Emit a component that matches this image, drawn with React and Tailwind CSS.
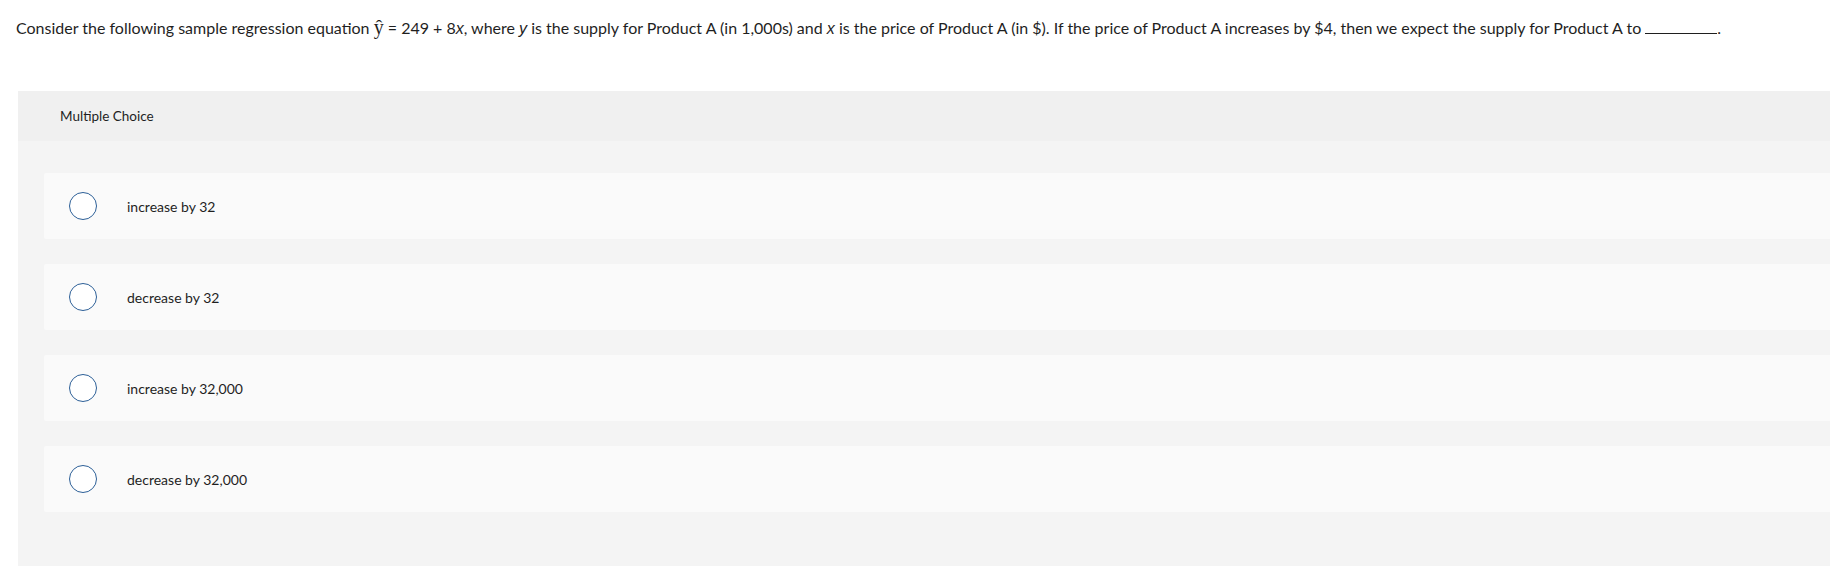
import React from "react";

const options = ["increase by 32", "decrease by 32", "increase by 32,000", "decrease by 32,000"];

const It = ({ children }) => (
  <span className="italic" style={{ fontFamily: "'Liberation Sans', sans-serif" }}>{children}</span>
);

export default function App() {
  return (
    <div className="w-[1830px] h-[568px] overflow-hidden bg-white text-[#1f1f1f]" style={{ fontFamily: "Lato, 'Open Sans', sans-serif" }}>
      <p className="pl-4 pt-[17px] text-[16px] leading-[22px] whitespace-nowrap">
        Consider the following sample regression equation{" "}
        <span className="text-[20px] leading-[16px]" style={{ fontFamily: "'Liberation Serif', serif" }}>ŷ</span>{" "}
        = 249 + 8<It>x</It>, where <It>y</It> is the supply for Product A (in 1,000s) and <It>x</It> is the price of Product A (in $). If the price of Product A increases by $4, then we expect the supply for Product A to{" "}
        <span className="inline-block w-[72px] border-b border-[#1f1f1f] align-baseline"></span>.
      </p>
      <div className="ml-[18px] mt-[51px] w-[1830px] bg-[#f4f4f4] pb-[54px]">
        <div className="h-[50px] bg-[#f0f0f0] flex items-center pl-[42px] text-[13.5px]">Multiple Choice</div>
        <div className="flex flex-col gap-[25px] pt-[32px] pl-[26px]">
          {options.map((o) => (
            <div key={o} className="h-[66px] bg-[#fafafa] flex items-center rounded-[2px]">
              <span className="ml-[25px] w-[28px] h-[28px] rounded-full border-[1.5px] border-[#2c5f97] bg-white"></span>
              <span className="ml-[30px] text-[14px]">{o}</span>
            </div>
          ))}
        </div>
      </div>
    </div>
  );
}
